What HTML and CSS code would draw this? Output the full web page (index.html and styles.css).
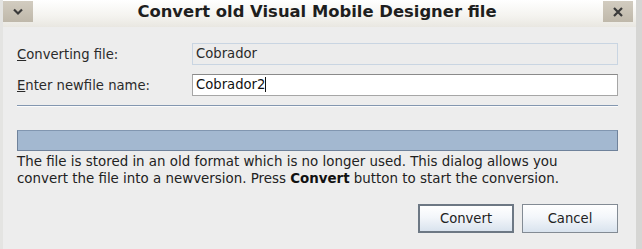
FILE: index.html
```html
<!DOCTYPE html>
<html>
<head>
<meta charset="utf-8">
<link rel="stylesheet" href="styles.css">
</head>
<body>
<div class="window">
  <div class="titlebar">
    <div class="tbtn">
      <svg width="12" height="8" viewBox="0 0 12 8"><path d="M2 1.5 L6 5.5 L10 1.5" fill="none" stroke="#3a3a3a" stroke-width="2.2"/></svg>
    </div>
    <div class="title">Convert old Visual Mobile Designer file</div>
    <div class="tbtn">
      <svg width="12" height="12" viewBox="0 0 12 12"><path d="M2 2 L10 10 M10 2 L2 10" fill="none" stroke="#3a3a3a" stroke-width="2.2"/></svg>
    </div>
  </div>
  <div class="content">
    <div class="row">
      <span class="label"><u>C</u>onverting file:</span>
      <div class="field readonly">Cobrador</div>
    </div>
    <div class="row">
      <span class="label"><u>E</u>nter newfile name:</span>
      <div class="field edit">Cobrador2<span class="caret"></span></div>
    </div>
    <div class="sep"></div>
    <div class="progress"></div>
    <p class="msg">The file is stored in an old format which is no longer used. This dialog allows you<br>convert the file into a newversion. Press <b>Convert</b> button to start the conversion.</p>
    <div class="buttons">
      <button class="btn default">Convert</button>
      <button class="btn">Cancel</button>
    </div>
  </div>
</div>
</body>
</html>
```

FILE: styles.css
```css
html, body {
  margin: 0;
  padding: 0;
  background: #ededed;
}
.window {
  width: 642px;
  height: 249px;
  box-sizing: border-box;
  background: #ededed;
  border-right: 6px solid #d6d6d4;
  border-left: 3px solid #e4e4e2;
  font-family: "DejaVu Sans", sans-serif;
  color: #222;
  display: flex;
  flex-direction: column;
}
.titlebar {
  height: 26px;
  display: flex;
  align-items: flex-start;
  justify-content: space-between;
  padding: 1px 3px 0 0;
  background: linear-gradient(#ffffff, #f4f3ef 60%, #e9e7e1);
}
.tbtn {
  width: 30px;
  height: 21px;
  background: linear-gradient(#d2ccc0, #bfb8aa);
  display: flex;
  align-items: center;
  justify-content: center;
}
.title {
  font-weight: bold;
  font-size: 16.4px;
  line-height: 22px;
  color: #1e1e1e;
  margin-right: 2px;
}
.content {
  padding: 16px 18px 0 14px;
  display: flex;
  flex-direction: column;
}
.row {
  display: flex;
  align-items: center;
  height: 22px;
  margin-bottom: 9px;
}
.row + .row { margin-bottom: 0; }
.label {
  width: 175px;
  font-size: 13.2px;
  color: #2a2a2a;
}
.field {
  flex: 1;
  height: 22px;
  box-sizing: border-box;
  font-size: 13.2px;
  line-height: 20px;
  padding-left: 3px;
  color: #2a2a2a;
}
.readonly {
  background: #ececec;
  border: 1px solid #c9d5e2;
}
.edit {
  background: #fff;
  border: 1px solid #a6a6a6;
  border-top-color: #8a8a8a;
  color: #111;
}
.caret {
  display: inline-block;
  width: 1px;
  height: 15px;
  background: #111;
  vertical-align: -3px;
}
.sep {
  margin-top: 9px;
  height: 1px;
  background: #8397b0;
  border-bottom: 1px solid #fbfbfb;
}
.progress {
  margin-top: 23px;
  height: 21px;
  box-sizing: border-box;
  background: #a3b8d0;
  border: 1px solid #6f829b;
  border-top-color: #8196b0;
}
.msg {
  margin: 2px 0 0 0;
  font-size: 13.4px;
  line-height: 17px;
  color: #222;
  white-space: nowrap;
}
.msg b { color: #111; }
.buttons {
  display: flex;
  justify-content: flex-end;
  gap: 8px;
  margin-top: 17px;
}
.btn {
  width: 96px;
  height: 29px;
  font-family: "DejaVu Sans", sans-serif;
  font-size: 13.2px;
  color: #222;
  background: linear-gradient(#ffffff, #f3f6fa 45%, #d9e3ee);
  border: 1px solid #838b94;
  border-radius: 0;
  padding: 0;
}
.btn.default {
  border: 2px solid #6d7884;
}
```
